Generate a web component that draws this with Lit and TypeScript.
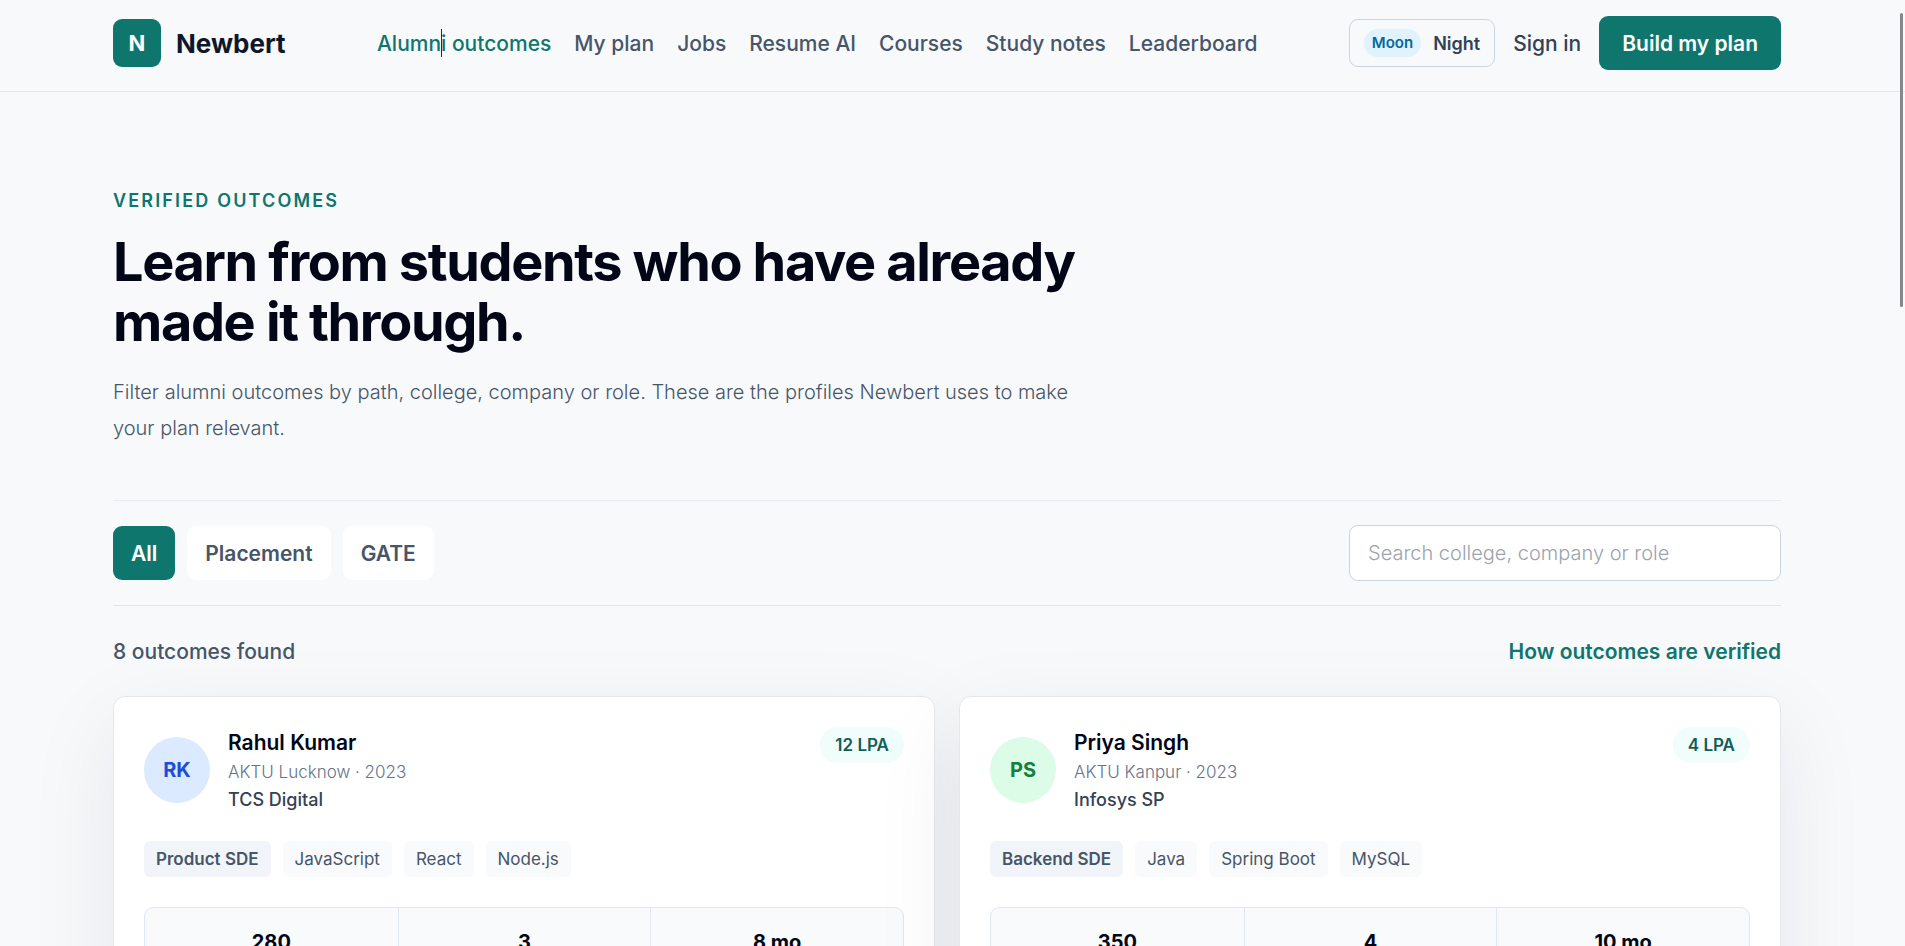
import { LitElement, html, css } from "lit";
import { customElement, property, state } from "lit/decorators.js";
import { classMap } from "lit/directives/class-map.js";

interface Outcome {
  initials: string;
  tone: "blue" | "green";
  name: string;
  college: string;
  company: string;
  salary: string;
  role: string;
  skills: string[];
  stats: string[];
}

const NAV = ["Alumni outcomes", "My plan", "Jobs", "Resume AI", "Courses", "Study notes", "Leaderboard"];
const FILTERS = ["All", "Placement", "GATE"];
const OUTCOMES: Outcome[] = [
  {
    initials: "RK",
    tone: "blue",
    name: "Rahul Kumar",
    college: "AKTU Lucknow · 2023",
    company: "TCS Digital",
    salary: "12 LPA",
    role: "Product SDE",
    skills: ["JavaScript", "React", "Node.js"],
    stats: ["280", "3", "8 mo"],
  },
  {
    initials: "PS",
    tone: "green",
    name: "Priya Singh",
    college: "AKTU Kanpur · 2023",
    company: "Infosys SP",
    salary: "4 LPA",
    role: "Backend SDE",
    skills: ["Java", "Spring Boot", "MySQL"],
    stats: ["350", "4", "10 mo"],
  },
];

@customElement("outcome-card")
export class OutcomeCard extends LitElement {
  @property({ attribute: false }) outcome!: Outcome;

  static styles = css`
    :host {
      display: block;
      box-sizing: border-box;
      padding: 30px 30px 36px;
      background: #fff;
      border: 1px solid #e5e7eb;
      border-radius: 12px;
      box-shadow: 0 27px 90px rgba(20, 24, 32, 0.08);
    }
    .head {
      display: flex;
      align-items: flex-start;
      justify-content: space-between;
      gap: 18px;
    }
    .person {
      display: flex;
      align-items: center;
      gap: 18px;
    }
    .avatar {
      display: grid;
      place-items: center;
      width: 66px;
      height: 66px;
      border-radius: 50%;
      font-size: 20px;
      font-weight: 700;
    }
    .blue {
      background: #dbeafe;
      color: #1d4ed8;
    }
    .green {
      background: #dcfce7;
      color: #15803d;
    }
    .name {
      margin: 0;
      font-size: 21px;
      line-height: 32px;
      font-weight: 600;
      color: #020617;
    }
    .college,
    .company {
      margin: 0;
      line-height: 27px;
    }
    .college {
      font-size: 17px;
      color: #64748b;
      font-weight: 300;
    }
    .company {
      font-size: 18px;
      color: #334155;
      font-weight: 500;
    }
    .salary {
      padding: 0 15px;
      border-radius: 18px;
      background: #f0fdfa;
      color: #115e59;
      font-size: 17px;
      line-height: 36px;
      font-weight: 600;
      white-space: nowrap;
    }
    .tags {
      display: flex;
      flex-wrap: wrap;
      gap: 12px;
      margin: 28px 0 30px;
      padding: 0;
      list-style: none;
    }
    .tag {
      padding: 0 12px;
      border-radius: 6px;
      background: #f8fafc;
      color: #475569;
      font-size: 17px;
      line-height: 36px;
    }
    .role {
      background: #f1f5f9;
      font-weight: 600;
    }
    .stats {
      display: grid;
      grid-template-columns: repeat(3, 1fr);
      border: 1px solid #e2e8f0;
      border-radius: 9px;
      background: #f8fafc;
    }
    .stat {
      padding: 18px 12px 60px;
      text-align: center;
      font-size: 20px;
      line-height: 32px;
      font-weight: 700;
      color: #020617;
    }
    .stat + .stat {
      border-left: 1px solid #e2e8f0;
    }
  `;

  render() {
    const o = this.outcome;
    return html`
      <div class="head">
        <div class="person">
          <div class=${classMap({ avatar: true, [o.tone]: true })}>${o.initials}</div>
          <div>
            <h2 class="name">${o.name}</h2>
            <p class="college">${o.college}</p>
            <p class="company">${o.company}</p>
          </div>
        </div>
        <span class="salary">${o.salary}</span>
      </div>
      <ul class="tags">
        <li class="tag role">${o.role}</li>
        ${o.skills.map((s) => html`<li class="tag">${s}</li>`)}
      </ul>
      <div class="stats">${o.stats.map((s) => html`<div class="stat">${s}</div>`)}</div>
    `;
  }
}

@customElement("app-root")
export class AppRoot extends LitElement {
  @state() private filter = "All";

  static styles = css`
    :host {
      display: block;
      position: relative;
      height: 100vh;
      overflow: hidden;
      background: #f7f9fb;
      color: #020617;
      font-family: Inter, "Liberation Sans", sans-serif;
    }
    a {
      color: inherit;
      text-decoration: none;
    }
    button,
    input {
      font: inherit;
      margin: 0;
      box-sizing: border-box;
    }
    .bar {
      padding: 16px 11px 21px 0;
      border-bottom: 1px solid #e2e6eb;
    }
    .page {
      padding-right: 11px;
    }
    .wrap {
      max-width: 1668px;
      margin: 0 auto;
    }
    .top {
      display: flex;
      align-items: center;
      justify-content: space-between;
    }
    .brand {
      display: flex;
      align-items: center;
      gap: 15px;
      font-size: 26px;
      font-weight: 700;
      color: #0f172a;
    }
    .mark {
      display: grid;
      place-items: center;
      width: 48px;
      height: 48px;
      border-radius: 9px;
      background: #0f766e;
      color: #fff;
      font-size: 22px;
    }
    .nav {
      display: flex;
      gap: 23px;
      font-size: 21px;
      font-weight: 500;
      color: #475569;
    }
    .nav .current {
      color: #0f766e;
    }
    .actions {
      display: flex;
      align-items: center;
      gap: 18px;
      font-size: 21px;
      font-weight: 500;
      color: #334155;
    }
    .theme {
      display: flex;
      align-items: center;
      gap: 12px;
      height: 48px;
      padding: 0 14px;
      border: 1px solid #cbd5e1;
      border-radius: 9px;
      background: transparent;
      color: #334155;
      font-size: 18px;
      font-weight: 600;
    }
    .moon {
      padding: 0 8px;
      border-radius: 14px;
      background: #e0f2fe;
      color: #0369a1;
      font-size: 15px;
      line-height: 28px;
    }
    .build {
      height: 54px;
      padding: 0 23px;
      border: 0;
      border-radius: 9px;
      background: #0f766e;
      color: #fff;
      font-size: 21px;
      font-weight: 600;
    }
    .hero {
      padding: 95px 0 54px;
      border-bottom: 1px solid #e8ebef;
    }
    .eyebrow {
      margin: 0;
      font-size: 18px;
      line-height: 27px;
      font-weight: 600;
      letter-spacing: 0.12em;
      text-transform: uppercase;
      color: #0f766e;
    }
    .title {
      max-width: 1100px;
      margin: 18px 0 0;
      font-size: 54px;
      line-height: 60px;
      font-weight: 700;
      letter-spacing: -0.025em;
    }
    .lead {
      max-width: 984px;
      margin: 22px 0 0;
      font-size: 20px;
      line-height: 36px;
      color: #475569;
      font-weight: 300;
    }
    .controls {
      display: flex;
      align-items: center;
      justify-content: space-between;
      padding: 24px 0;
      border-bottom: 1px solid #e2e6eb;
    }
    .filters {
      display: flex;
      gap: 12px;
    }
    .filter {
      height: 54px;
      padding: 0 18px;
      border: 0;
      border-radius: 9px;
      background: #fff;
      color: #475569;
      font-size: 21px;
      font-weight: 600;
    }
    .filter.on {
      background: #0f766e;
      color: #fff;
    }
    .search {
      width: 432px;
      height: 56px;
      padding: 0 18px;
      border: 1px solid #cbd5e1;
      border-radius: 9px;
      background: #fff;
      color: #020617;
      font-size: 20px;
      font-weight: 300;
    }
    .search::placeholder {
      color: #9ca3af;
    }
    .summary {
      display: flex;
      justify-content: space-between;
      padding: 31px 0 29px;
      font-size: 21px;
      line-height: 30px;
      font-weight: 500;
      color: #475569;
    }
    .how {
      color: #0f766e;
      font-weight: 600;
    }
    .cards {
      display: grid;
      grid-template-columns: repeat(2, 1fr);
      gap: 24px;
    }
    .ibeam {
      position: absolute;
      left: 441px;
      top: 29px;
      width: 1px;
      height: 28px;
      background: #1e293b;
    }
    .thumb {
      position: absolute;
      right: 2px;
      top: 13px;
      width: 3px;
      height: 294px;
      border-radius: 2px;
      background: #85878a;
    }
  `;

  render() {
    return html`
      <header class="bar">
        <div class="wrap top">
          <a class="brand" href="#"><span class="mark">N</span>Newbert</a>
          <nav class="nav">
            ${NAV.map((n, i) => html`<a href="#" class=${classMap({ current: i === 0 })}>${n}</a>`)}
          </nav>
          <div class="actions">
            <button class="theme"><span class="moon">Moon</span>Night</button>
            <a href="#">Sign in</a>
            <button class="build">Build my plan</button>
          </div>
        </div>
      </header>
      <main class="page">
        <div class="wrap">
          <section class="hero">
            <p class="eyebrow">Verified outcomes</p>
            <h1 class="title">Learn from students who have already made it through.</h1>
            <p class="lead">
              Filter alumni outcomes by path, college, company or role. These are the profiles Newbert uses to make
              your plan relevant.
            </p>
          </section>
          <div class="controls">
            <div class="filters">
              ${FILTERS.map(
                (f) => html`<button
                  class=${classMap({ filter: true, on: f === this.filter })}
                  @click=${() => (this.filter = f)}
                >${f}</button>`
              )}
            </div>
            <input
              class="search"
              type="search"
              aria-label="Search college, company or role"
              placeholder="Search college, company or role"
            />
          </div>
          <div class="summary">
            <span>8 outcomes found</span>
            <a class="how" href="#">How outcomes are verified</a>
          </div>
          <section class="cards">
            ${OUTCOMES.map((o) => html`<outcome-card .outcome=${o}></outcome-card>`)}
          </section>
        </div>
      </main>
      <div class="ibeam"></div>
      <div class="thumb"></div>
    `;
  }
}
